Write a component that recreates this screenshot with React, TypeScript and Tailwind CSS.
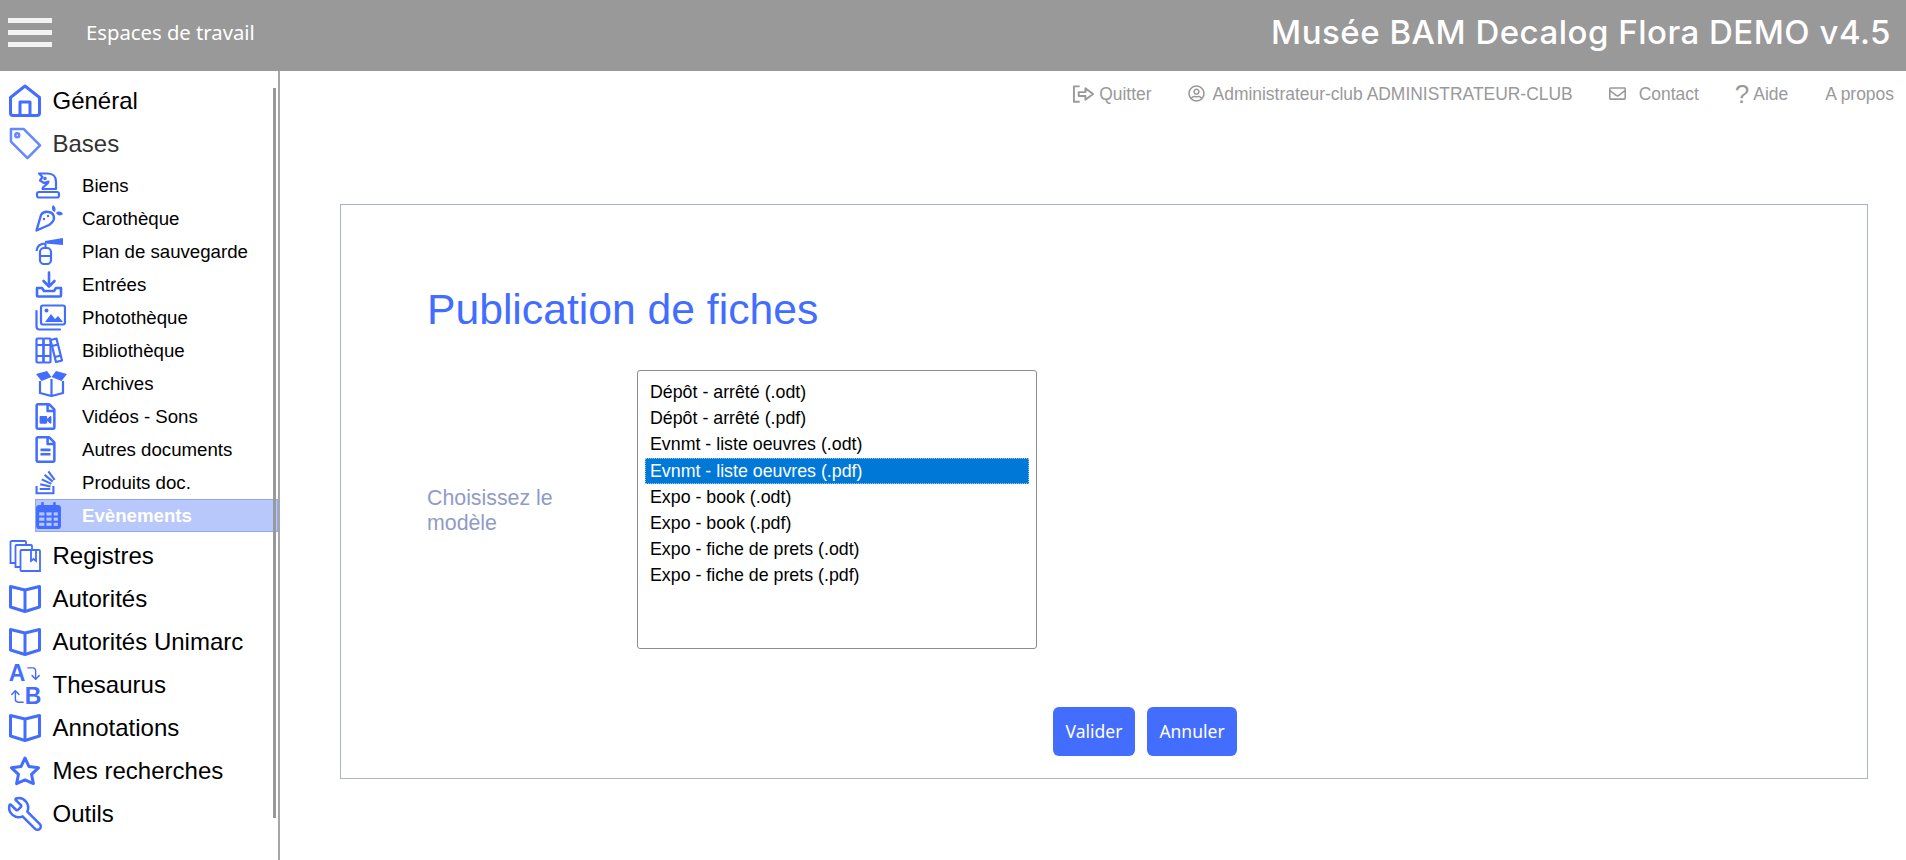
import type { ReactNode } from "react"
import { CornerLeftUp, CornerRightDown, Wrench } from "lucide-react"
import { FaRegEnvelope, FaRegFileAlt, FaRegFileVideo, FaRegUserCircle, FaStackOverflow } from "react-icons/fa"

const sans = "font-['Liberation_Sans',Arial,sans-serif]"
const blue = "#426dff"

const HouseIcon = () => (
    <svg viewBox="0 0 32 33" className="h-[33px] w-[32px]" fill="none" stroke={blue} strokeWidth="3" strokeLinejoin="round">
        <path d="M1.5 13.5 16 2l14.5 11.5V29a2.5 2.5 0 0 1-2.5 2.5H4A2.5 2.5 0 0 1 1.5 29z" />
        <path d="M11 31V18h10v13" />
    </svg>
)

const TagIcon = () => (
    <svg viewBox="0 0 34 34" className="h-[33px] w-[33px]" fill="none" stroke="#6488ff" strokeWidth="2.6" strokeLinejoin="round">
        <path d="M2 2h13l17 17-13 13L2 15z" />
        <circle cx="8.5" cy="8.5" r="2" />
    </svg>
)

const BookIcon = () => (
    <svg viewBox="0 0 32 29" className="h-[29px] w-[32px]" fill="none" stroke={blue} strokeWidth="3" strokeLinejoin="round">
        <path d="M1.5 2.5 16 6l14.5-3.5V23L16 27.5 1.5 23z" />
        <path d="M16 6v21" />
    </svg>
)

const StarIcon = () => (
    <svg viewBox="0 0 32 31" className="h-[31px] w-[32px]" fill="none" stroke={blue} strokeWidth="3" strokeLinejoin="round">
        <path d="m16 3 4 8.6 9.5 1.2-7 6.5 1.9 9.3L16 24.9l-8.4 3.7 1.9-9.3-7-6.5 9.5-1.2z" />
    </svg>
)

const RegistersIcon = () => (
    <svg viewBox="0 0 32 32" className="h-[32px] w-[32px]" fill="none" stroke={blue} strokeWidth="1.8">
        <path d="M6 23H1.5V2a1 1 0 0 1 1-1H16a1 1 0 0 1 1 1v3" />
        <path d="M11 27H6.5V6a1 1 0 0 1 1-1H22a1 1 0 0 1 1 1v4" />
        <path d="M11.5 11a1 1 0 0 1 1-1H30a1 1 0 0 1 1 1v20H12.5a1 1 0 0 1-1-1z" fill="white" />
        <path d="M22 10v11l2.5-2 2.5 2V10" />
    </svg>
)

const ThesaurusIcon = () => (
    <span className="grid w-[32px] grid-cols-2 place-items-center font-['Liberation_Sans',sans-serif] text-[23px] leading-[23px] font-bold text-[#426dff]">
        <span>A</span>
        <CornerRightDown className="h-[17px] w-[17px]" strokeWidth={2} />
        <CornerLeftUp className="h-[17px] w-[17px]" strokeWidth={2} />
        <span>B</span>
    </span>
)

const KnightIcon = () => (
    <svg viewBox="0 0 27 27" className="h-[27px] w-[27px]" fill="none" stroke={blue} strokeWidth="2.2" strokeLinejoin="round">
        <path d="M4 1.5h9c5 0 8 3.5 8 8V17H7.5c0-3 5.5-4 6-7.5L9 11 5 8.5 7.5 5z" />
        <rect x="2" y="20" width="22" height="5.5" rx="2" />
        <circle cx="10" cy="6.5" r=".7" fill={blue} />
    </svg>
)

const CarrotIcon = () => (
    <svg viewBox="0 0 28 27" className="h-[27px] w-[28px]" fill="none" stroke={blue} strokeWidth="2.4" strokeLinejoin="round">
        <path d="M1.5 25.5 6 10c3-5 13-4 13 3 0 3-2 5-5 7z" />
        <path d="M18 0c-2 3-1 6 2 7 1-2 1-5-2-7zM28 9c-2-3-5-3-7-1 2 3 5 3 7 1z" fill={blue} stroke="none" />
        <circle cx="9" cy="14" r="1.2" fill={blue} stroke="none" />
        <circle cx="13" cy="11" r="1.2" fill={blue} stroke="none" />
    </svg>
)

const ExtinguisherIcon = () => (
    <svg viewBox="0 0 28 27" className="h-[27px] w-[28px]" fill="none" stroke={blue} strokeWidth="2.2" strokeLinejoin="round">
        <rect x="5" y="10" width="11" height="16" rx="4" />
        <path d="M5 18h11M10.5 10V5.500M1.500 13C2 8 5 5.500 10.500 5.500" />
        <path d="M10 3 28 0v7L10 5.500z" fill={blue} stroke="none" />
    </svg>
)

const InboxIcon = () => (
    <svg viewBox="0 0 28 27" className="h-[27px] w-[28px]" fill="none" stroke={blue} strokeWidth="2.6" strokeLinejoin="round" strokeLinecap="round">
        <path d="M14 1.5V15M8.5 10l5.5 5.5 5.5-5.5" />
        <path d="M7 17H2v7.5a1 1 0 0 0 1 1h22a1 1 0 0 0 1-1V17h-5l-2 3H9z" />
    </svg>
)

const PhotosIcon = () => (
    <svg viewBox="0 0 31 27" className="h-[27px] w-[31px]" fill="none" stroke={blue} strokeWidth="2.2" strokeLinejoin="round">
        <rect x="6" y="1.5" width="24" height="19" rx="2" />
        <path d="M1.5 7v15.5a3 3 0 0 0 3 3H25" strokeLinecap="round" />
        <path d="m10 18 6-8 4 5 3-3 5 6z" fill={blue} stroke="none" />
        <circle cx="11.5" cy="6.5" r="2" fill={blue} stroke="none" />
    </svg>
)

const BooksIcon = () => (
    <svg viewBox="0 0 28 27" className="h-[27px] w-[28px]" fill="none" stroke={blue} strokeWidth="2.2" strokeLinejoin="round">
        <rect x="1.5" y="1.5" width="7" height="24" rx="1" />
        <rect x="8.5" y="1.5" width="7" height="24" rx="1" />
        <path d="M1.5 8h14M1.5 19h14" />
        <path d="m15.5 3 6-1.5 5.5 22-6 1.5z" />
        <path d="m17 9 6-1.500M20 20l6-1.500" />
    </svg>
)

const BoxIcon = () => (
    <svg viewBox="0 0 33 27" className="h-[27px] w-[33px]" fill="none" stroke={blue} strokeWidth="2.2" strokeLinejoin="round">
        <path d="M5 11v12l11.5 3L28 23V11M16.5 9v17" />
        <path d="M1 4 12 1l4.500 6-10 4zM32 4 21 1l-4.500 6 10 4z" fill={blue} stroke="none" />
    </svg>
)

const CalendarIcon = () => (
    <svg viewBox="0 0 24 26" className="h-[27px] w-[25px]" fill={blue}>
        <rect x="5" y="0" width="2.5" height="5" rx="1" />
        <rect x="16.5" y="0" width="2.5" height="5" rx="1" />
        <path d="M3 3h18a3 3 0 0 1 3 3v17a3 3 0 0 1-3 3H3a3 3 0 0 1-3-3V6a3 3 0 0 1 3-3z" />
        <g fill="#b8c8fb">
            <rect x="3" y="10" width="5" height="3" />
            <rect x="10" y="10" width="5" height="3" />
            <rect x="17" y="10" width="4" height="3" />
            <rect x="3" y="15" width="5" height="3" />
            <rect x="10" y="15" width="5" height="3" />
            <rect x="17" y="15" width="4" height="3" />
            <rect x="3" y="20" width="5" height="3" />
            <rect x="10" y="20" width="5" height="3" />
            <rect x="17" y="20" width="4" height="3" />
        </g>
    </svg>
)

const QuitIcon = () => (
    <svg viewBox="0 0 24 20" className="h-[20px] w-[23px]" fill="none" stroke="#999999" strokeWidth="2" strokeLinejoin="round">
        <path d="M8 2H2v16h6" />
        <path d="M7 8h7V4l8 6-8 6v-4H7z" />
    </svg>
)

const fileIcon = "h-[27px] w-[21px] text-[#426dff]"

const topBefore: { label: string; icon: ReactNode; muted?: boolean }[] = [
    { label: "Général", icon: <HouseIcon /> },
    { label: "Bases", icon: <TagIcon />, muted: true },
]

const subItems: { label: string; icon: ReactNode; active?: boolean }[] = [
    { label: "Biens", icon: <KnightIcon /> },
    { label: "Carothèque", icon: <CarrotIcon /> },
    { label: "Plan de sauvegarde", icon: <ExtinguisherIcon /> },
    { label: "Entrées", icon: <InboxIcon /> },
    { label: "Photothèque", icon: <PhotosIcon /> },
    { label: "Bibliothèque", icon: <BooksIcon /> },
    { label: "Archives", icon: <BoxIcon /> },
    { label: "Vidéos - Sons", icon: <FaRegFileVideo className={fileIcon} /> },
    { label: "Autres documents", icon: <FaRegFileAlt className={fileIcon} /> },
    { label: "Produits doc.", icon: <FaStackOverflow className={fileIcon} /> },
    { label: "Evènements", icon: <CalendarIcon />, active: true },
]

const topAfter: { label: string; icon: ReactNode }[] = [
    { label: "Registres", icon: <RegistersIcon /> },
    { label: "Autorités", icon: <BookIcon /> },
    { label: "Autorités Unimarc", icon: <BookIcon /> },
    { label: "Thesaurus", icon: <ThesaurusIcon /> },
    { label: "Annotations", icon: <BookIcon /> },
    { label: "Mes recherches", icon: <StarIcon /> },
    { label: "Outils", icon: <Wrench className="-ml-[3px] h-[38px] w-[38px] -scale-x-100 text-[#426dff]" strokeWidth={1.6} /> },
]

const models = [
    "Dépôt - arrêté (.odt)",
    "Dépôt - arrêté (.pdf)",
    "Evnmt - liste oeuvres (.odt)",
    "Evnmt - liste oeuvres (.pdf)",
    "Expo - book (.odt)",
    "Expo - book (.pdf)",
    "Expo - fiche de prets (.odt)",
    "Expo - fiche de prets (.pdf)",
]

const TopItem = ({ label, icon, muted }: { label: string; icon: ReactNode; muted?: boolean }) => (
    <div className="flex h-[43px] items-center">
        <span className="flex w-[52.5px] shrink-0 justify-start pl-[9px]">{icon}</span>
        <span className={`text-[24px] ${muted ? "text-[#333333]" : "text-black"}`}>{label}</span>
    </div>
)

const Sidebar = () => (
    <aside className={`${sans} relative w-[280px] shrink-0 border-r-2 border-[#a6a6a6] pt-[8px]`}>
        {/* scrollbar */}
        <div className="absolute top-[17px] right-[2px] z-10 h-[730px] w-[3px] bg-[#999999]" />

        {topBefore.map((item) => (
            <TopItem key={item.label} {...item} />
        ))}

        <div className="ml-[35px] mt-[4px]">
            {subItems.map((item) => (
                <div
                    key={item.label}
                    className={`flex h-[33px] items-center ${item.active ? "border border-[#8ea8f8] bg-[#b8c8fb] font-bold text-white" : "text-black"}`}
                >
                    <span className={`flex shrink-0 justify-start ${item.active ? "w-[46px]" : "w-[47px]"}`}>{item.icon}</span>
                    <span className="text-[18.67px]">{item.label}</span>
                </div>
            ))}
        </div>

        <div className="mt-[2px]">
            {topAfter.map((item) => (
                <TopItem key={item.label} {...item} />
            ))}
        </div>
    </aside>
)

const TopLinks = () => (
    <nav className={`${sans} flex h-[46px] items-center justify-end gap-[36px] pr-[12px] text-[17.45px] text-[#999999]`}>
        <span className="flex items-center gap-[4px]">
            <QuitIcon />
            Quitter
        </span>
        <span className="flex items-center gap-[8px]">
            <FaRegUserCircle className="h-[17px] w-[17px]" />
            Administrateur-club ADMINISTRATEUR-CLUB
        </span>
        <span className="flex items-center gap-[13px]">
            <FaRegEnvelope className="h-[17px] w-[17px]" />
            Contact
        </span>
        <span className="mr-[1px] flex items-center gap-[4px]">
            <span className="text-[26px] leading-none">?</span>
            Aide
        </span>
        <span>A propos</span>
    </nav>
)

const App = () => {
    return (
        <div className="flex h-[860px] w-[1906px] flex-col overflow-hidden bg-white">
            <header className="flex h-[71px] shrink-0 items-center bg-[#999999] pb-[6px] text-white">
                <div className="ml-[8px] flex w-[44px] flex-col gap-[7px]">
                    <span className="h-[5px] bg-[#f2f2f2]" />
                    <span className="h-[5px] bg-[#f2f2f2]" />
                    <span className="h-[5px] bg-[#f2f2f2]" />
                </div>
                <span className="ml-[34px] font-['Noto_Sans',sans-serif] text-[20.25px]">Espaces de travail</span>
                <span className="ml-auto pr-[15px] font-['Inter',sans-serif] text-[33px] font-medium tracking-[0.5px]">
                    Musée BAM Decalog Flora DEMO v4.5
                </span>
            </header>

            <div className="flex min-h-0 flex-1">
                <Sidebar />

                <main className="flex-1">
                    <TopLinks />

                    <section className={`${sans} ml-[60px] mt-[87px] h-[575px] w-[1528px] border border-[#aab4cc] pl-[86px] pt-[81px]`}>
                        <h1 className="text-[42.67px] leading-[46px] text-[#426dff]">Publication de fiches</h1>

                        <div className="mt-[38px] flex items-center">
                            <label className="w-[210px] pt-[2px] text-[21.33px] leading-[25px] text-[#8f9bc8]">
                                Choisissez le
                                <br />
                                modèle
                            </label>
                            <div role="listbox" className="h-[279px] w-[400px] rounded-[3px] border border-[#8c8c8c] px-[7px] py-[8px] text-[17.8px] text-black">
                                {models.map((model, i) => (
                                    <div
                                        key={model}
                                        role="option"
                                        aria-selected={i === 3}
                                        className={`h-[26.2px] px-[5px] leading-[26px] ${i === 3 ? "bg-[#0078d7] text-white outline-1 outline-dotted -outline-offset-1 outline-white/60" : ""}`}
                                    >
                                        {model}
                                    </div>
                                ))}
                            </div>
                        </div>

                        <div className="ml-[626px] mt-[58px] flex gap-[12px] font-['Noto_Sans',sans-serif] text-[17.5px] text-white">
                            <button className="h-[49px] w-[82px] rounded-[6px] bg-[#426dff]">Valider</button>
                            <button className="h-[49px] w-[90px] rounded-[6px] bg-[#426dff]">Annuler</button>
                        </div>
                    </section>
                </main>
            </div>
        </div>
    )
}

export default App
